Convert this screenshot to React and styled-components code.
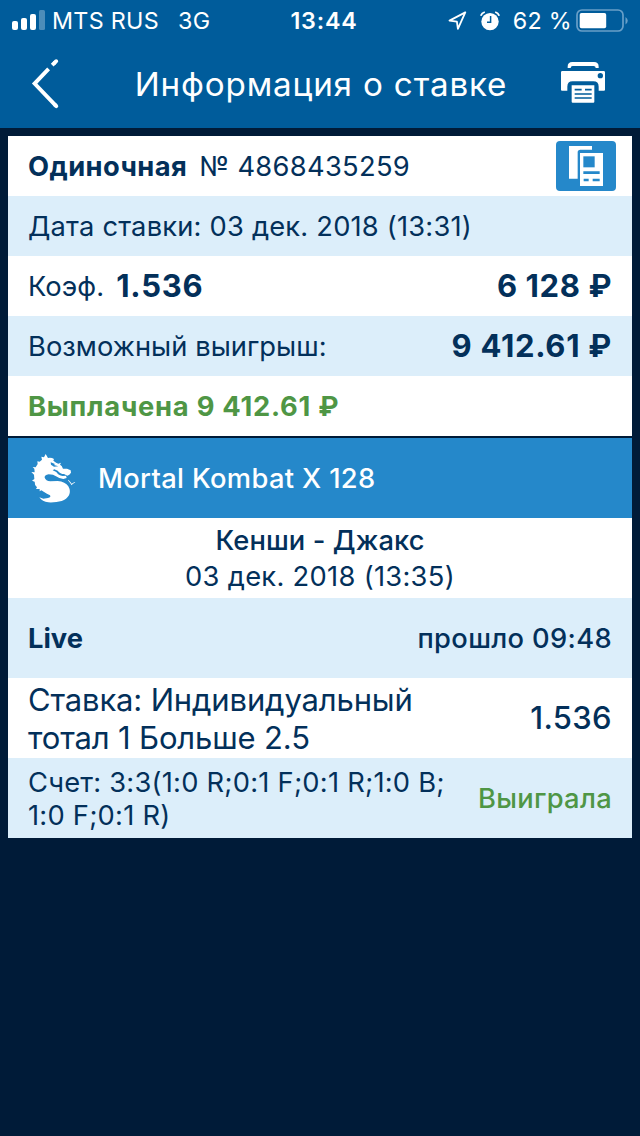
import React from "react";
import styled, { createGlobalStyle } from "styled-components";

const GlobalStyle = createGlobalStyle`
  *, *::before, *::after { box-sizing: border-box; }
  body {
    margin: 0;
    background: #001b38;
    font-family: Inter, "Noto Sans", sans-serif;
    color: #03305a;
  }
  svg { display: block; flex: none; }
`;

const Screen = styled.div`
  width: 640px;
  min-height: 1136px;
  background: #001b38;
`;

const Header = styled.header`
  height: 128px;
  background: #005c9b;
  color: #fff;
`;

const StatusBar = styled.div`
  display: grid;
  grid-template-columns: 1fr auto 1fr;
  align-items: center;
  height: 40px;
  padding: 2px 11px 0 12px;
`;

const StatusGroup = styled.div`
  display: flex;
  align-items: center;
  justify-content: ${(p) => (p.$end ? "flex-end" : "flex-start")};
  gap: ${(p) => p.$gap ?? 0}px;
`;

const Clock = styled.time`
  margin-left: 7px;
  font-size: 23.3px;
  font-weight: 600;
  line-height: 36px;
  letter-spacing: 0.8px;
`;

const NavBar = styled.nav`
  display: grid;
  grid-template-columns: 1fr auto 1fr;
  align-items: center;
  height: 88px;
  padding: 0 34px 0 30px;
`;

const Title = styled.h1`
  margin: 0 0 0 6px;
  font-size: 33.2px;
  font-weight: 400;
  line-height: 36px;
  letter-spacing: 0.83px;
`;

const IconButton = styled.button`
  display: flex;
  padding: 0;
  border: 0;
  background: none;
  color: inherit;
`;

const PrintButton = styled(IconButton)`
  justify-self: end;
  padding-bottom: 6px;
`;

const Ticket = styled.main`
  padding: 8px 8px 0;
`;

const Card = styled.section`
  margin-bottom: 2px;
`;

const Row = styled.div`
  display: flex;
  align-items: center;
  justify-content: space-between;
  height: ${(p) => (p.$tall ? 80 : 60)}px;
  padding: 2px 20px 0 20px;
  background: ${(p) => (p.$tint ? "#dceefa" : "#fff")};
`;

const TopRow = styled(Row)`
  padding-right: 16px;
`;

const EventTitle = styled.div`
  display: flex;
  align-items: center;
  gap: 21px;
  height: 80px;
  padding: 2px 23px 0;
  background: #2588ca;
  color: #fff;
`;

const Matchup = styled.div`
  display: flex;
  flex-direction: column;
  align-items: center;
  height: 80px;
  padding-top: 5px;
  background: #fff;
`;

const Text = styled.span`
  display: block;
  white-space: pre-line;
  font-size: ${(p) => p.$size ?? 27.3}px;
  font-weight: ${(p) => p.$weight ?? 400};
  line-height: ${(p) => p.$line ?? 36}px;
  letter-spacing: ${(p) => p.$track ?? 0}px;
  ${(p) => p.$won && "color: #4f9645;"}
`;

const Figure = styled(Text)`
  padding-bottom: 2px;
  font-size: 31px;
`;

const StatusText = styled(Text)`
  font-size: 23.3px;
  letter-spacing: 0.3px;
`;

const Pair = styled.div`
  display: flex;
  align-items: center;
  gap: 12px;
`;

const CopyButton = styled(IconButton)`
  width: 60px;
  height: 50px;
  margin-bottom: 2px;
  border-radius: 4px;
  background: #2588ca;
  color: #fff;
`;

const SignalIcon = () => (
  <svg width="34" height="22" viewBox="0 0 34 22" fill="#fff">
    <rect x="0" y="11" width="6" height="9" rx="2" />
    <rect x="9" y="8" width="6" height="12" rx="2" />
    <rect x="18" y="4" width="6" height="16" rx="2" />
    <rect x="27" y="0" width="6" height="20" rx="1.5" opacity=".3" />
  </svg>
);

const LocationIcon = () => (
  <svg width="19" height="20" viewBox="0 0 19 20" fill="none" stroke="#fff" strokeWidth="1.8" strokeLinejoin="round">
    <path d="M17.3 1.4 1.5 9.6l7.4 1 1 7.3Z" />
  </svg>
);

const AlarmIcon = () => (
  <svg width="20" height="20" viewBox="0 0 20 20">
    <circle cx="10" cy="10.6" r="8.7" fill="#fff" />
    <path d="M.8 4.8Q1.8 2 4.8 1M15.2 1Q18.2 2 19.2 4.8" fill="none" stroke="#fff" strokeWidth="1.8" />
    <path d="M10.6 5v6.2H7" fill="none" stroke="#005c9b" strokeWidth="1.5" />
  </svg>
);

const BatteryIcon = () => (
  <svg width="53" height="24" viewBox="0 0 53 24">
    <rect x="1" y="1" width="46" height="21" rx="5" fill="none" stroke="#689fc8" strokeWidth="1.7" />
    <rect x="3.7" y="4" width="26.5" height="15.3" rx="1.8" fill="#fff" />
    <path d="M49.5 8q4.5 3.6 0 7.6Z" fill="#689fc8" />
  </svg>
);

const BackIcon = () => (
  <svg width="30" height="52" viewBox="0 0 30 52" fill="none" stroke="#fff" strokeWidth="3.9">
    <path d="M22.2 7.2 25 4.4" />
    <path d="M24.5 4.9 26.2 3.2" strokeLinecap="round" />
    <path d="M18.6 10.9 4.6 25.6 26 47.8" />
    <path d="m25 46.8 1.3 1.3" strokeLinecap="round" />
  </svg>
);

const PrinterIcon = () => (
  <svg width="46" height="44" viewBox="0 0 138 132">
    <path d="M23 27v-4q0-14 14-14h65q14 0 14 14v4h-9q0-6-6-6H38q-6 0-6 6Z" fill="#fff" />
    <path d="M7 36h124q4 0 4 4v52q0 3-3 3h-16V83q0-16-16-16H38q-16 0-16 16v12H6q-3 0-3-3V40q0-4 4-4Z" fill="#fff" />
    <circle cx="121" cy="50" r="8" fill="#005c9b" />
    <path d="M35 79h68v49q0 3-3 3H38q-3 0-3-3Z" fill="#fff" />
    <path d="M44 92h21m10 0h20M44 105h51M44 117h51" stroke="#005c9b" strokeWidth="5" />
  </svg>
);

const CopyIcon = () => (
  <svg width="60" height="50" viewBox="0 0 180 150">
    <path d="M39 15h69v11H73q-8 0-8 8v79H39Z" fill="#fff" />
    <path d="M72 36h69v99H72Z" fill="#fff" />
    <path d="M82 46h34v33H82Z" fill="#2588ca" />
    <path d="M82 95h49M83 117h15m12 0h21" stroke="#2588ca" strokeWidth="8" />
  </svg>
);

const DragonIcon = () => (
  <svg width="46" height="50" viewBox="12 17 138 150" fill="#fff">
    <path d="M56 17 63 29Q73 27 81 32L79 37Q88 44 94 46L102 43 99 49 104 53 108 61 120 61 131 66 132 73 127 79 121 82 111 77Q100 77 92 67L82 63 77 66 88 71Q94 81 107 83L117 82 119 89 109 92Q96 90 87 84L78 79 65 78Q52 80 53 88 56 97 70 99L92 98Q115 100 124 114 132 128 126 141 119 153 104 158 86 163 64 162 46 160 37 147L49 151 63 149Q73 147 69 141 60 136 50 130L43 126 38 129 38 122 27 122 30 117Q22 109 23 100L15 97 22 92 21 79 13 71 23 72 22 61 17 56 26 57 32 47 31 39 38 40 45 34 43 25 51 27Z" />
    <path d="m71 42 13 5-3 3 13 4-13 1-9-6Z" fill="#2588ca" />
    <path d="m124 94 7 8 3 4q5-3 9-5l2 1-8 5-3 4-4-6-7-9Z" />
  </svg>
);

export default function App() {
  return (
    <Screen>
      <GlobalStyle />
      <Header>
        <StatusBar>
          <StatusGroup $gap={19}>
            <StatusGroup $gap={6}>
              <SignalIcon />
              <StatusText>MTS RUS</StatusText>
            </StatusGroup>
            <StatusText>3G</StatusText>
          </StatusGroup>
          <Clock>13:44</Clock>
          <StatusGroup $end $gap={4}>
            <StatusGroup $gap={13}>
              <LocationIcon />
              <AlarmIcon />
              <StatusText>62 %</StatusText>
            </StatusGroup>
            <BatteryIcon />
          </StatusGroup>
        </StatusBar>
        <NavBar>
          <IconButton aria-label="Назад"><BackIcon /></IconButton>
          <Title>Информация о ставке</Title>
          <PrintButton aria-label="Печать"><PrinterIcon /></PrintButton>
        </NavBar>
      </Header>
      <Ticket>
        <Card>
          <TopRow>
            <Pair>
              <Text $weight={700} $track={0.45}>Одиночная</Text>
              <Text $track={0.3}>№ 4868435259</Text>
            </Pair>
            <CopyButton aria-label="Копировать"><CopyIcon /></CopyButton>
          </TopRow>
          <Row $tint><Text $track={0.2}>Дата ставки: 03 дек. 2018 (13:31)</Text></Row>
          <Row>
            <Pair>
              <Text $track={0.1}>Коэф.</Text>
              <Figure $weight={700} $track={0.7}>1.536</Figure>
            </Pair>
            <Figure $weight={700} $track={0.6}>6 128 ₽</Figure>
          </Row>
          <Row $tint>
            <Text $track={0.05}>Возможный выигрыш:</Text>
            <Figure $weight={700} $track={0.7}>9 412.61 ₽</Figure>
          </Row>
          <Row><Text $weight={700} $track={0.75} $won>Выплачена 9 412.61 ₽</Text></Row>
        </Card>
        <Card>
          <EventTitle>
            <DragonIcon />
            <Text $weight={500} $track={0.35}>Mortal Kombat X 128</Text>
          </EventTitle>
          <Matchup>
            <Text $weight={500} $track={0.1}>Кенши - Джакс</Text>
            <Text $track={0.3}>03 дек. 2018 (13:35)</Text>
          </Matchup>
          <Row $tall $tint>
            <Text $weight={700}>Live</Text>
            <Text $weight={500} $track={0.35}>прошло 09:48</Text>
          </Row>
          <Row $tall>
            <Text $size={31} $line={38} $track={-0.15}>{"Ставка: Индивидуальный\nтотал 1 Больше 2.5"}</Text>
            <Figure $weight={500} $track={0.35}>1.536</Figure>
          </Row>
          <Row $tall $tint>
            <Text $line={33} $track={0.23}>{"Счет: 3:3(1:0 R;0:1 F;0:1 R;1:0 B;\n1:0 F;0:1 R)"}</Text>
            <Text $weight={500} $track={0.3} $won>Выиграла</Text>
          </Row>
        </Card>
      </Ticket>
    </Screen>
  );
}
